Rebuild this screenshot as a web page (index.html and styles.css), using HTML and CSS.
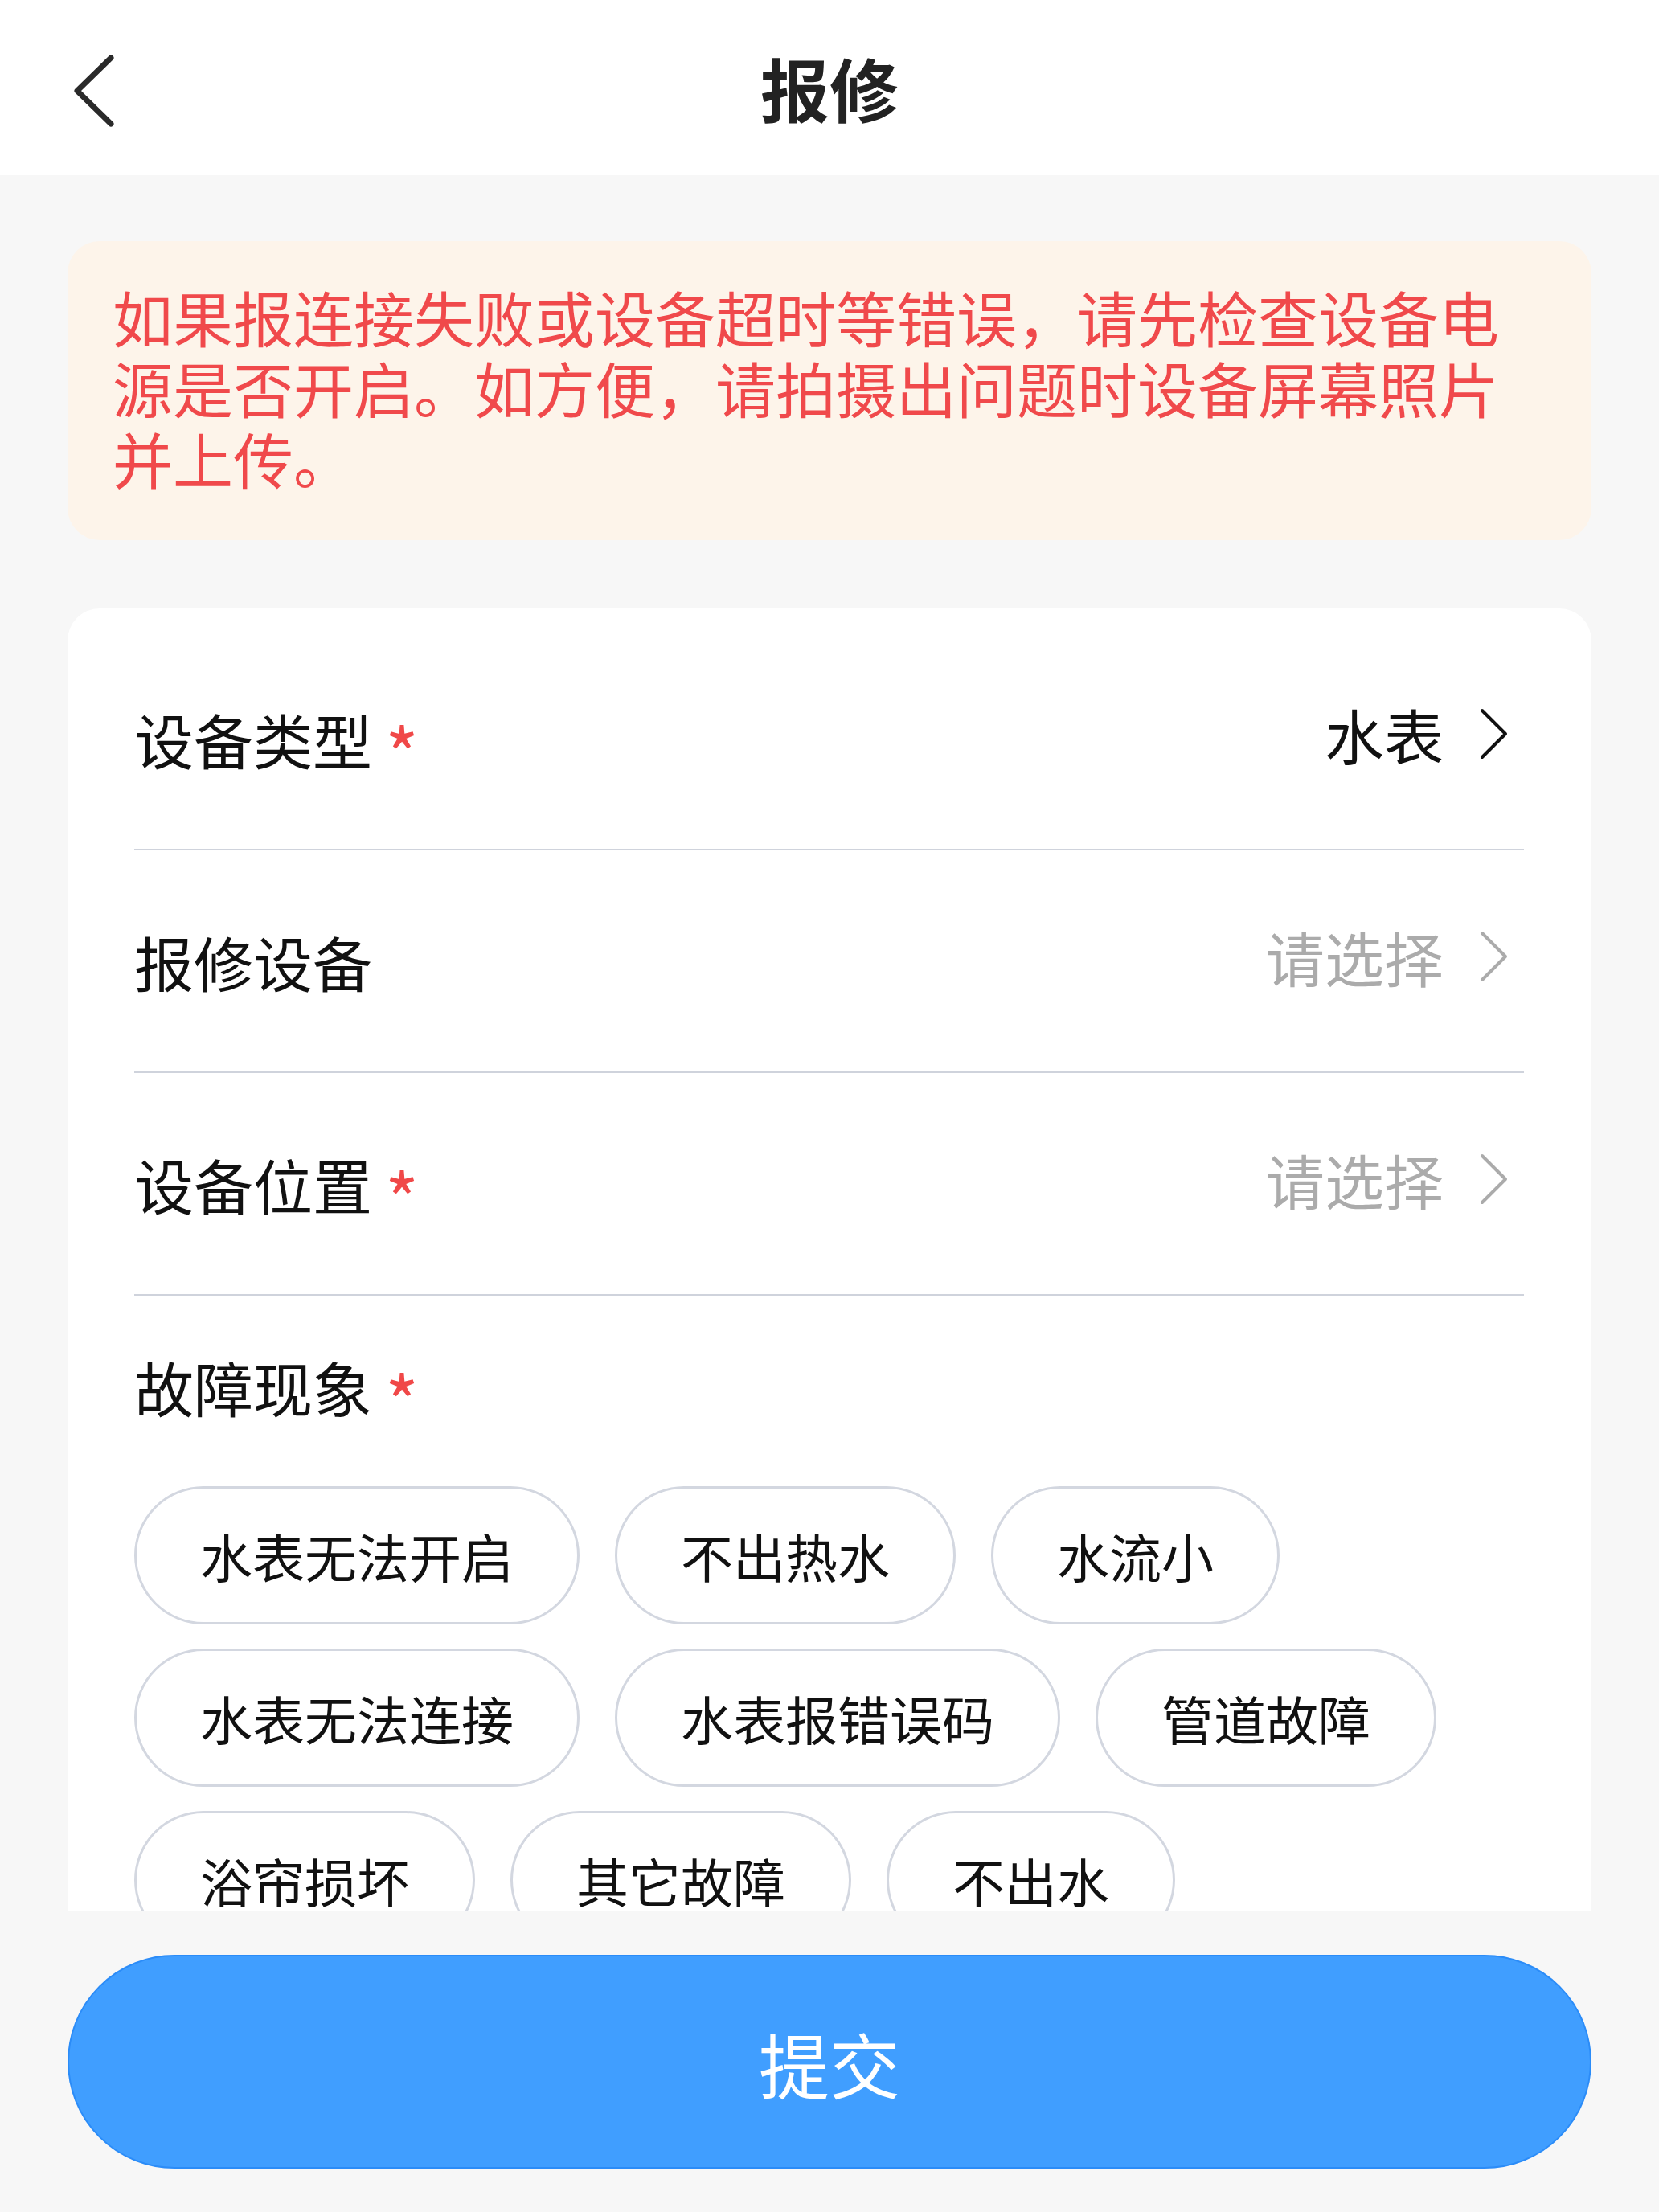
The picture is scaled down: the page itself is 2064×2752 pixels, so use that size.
FILE: index.html
```html
<!DOCTYPE html>
<html lang="zh-CN">

<head>
    <meta charset="UTF-8">
    <meta name="viewport" content="width=device-width, initial-scale=1.0">
    <title>报修</title>
    <link rel="stylesheet" href="styles.css">
</head>

<body>
    <header class="nav-bar">
        <a class="back-btn" href="#">
            <svg viewBox="0 0 60 100" width="60" height="100">
                <path d="M52 12 L10 53 L52 94" fill="none" stroke="#2a2a2a" stroke-width="7" stroke-linecap="round" stroke-linejoin="round" />
            </svg>
        </a>
        <h1 class="nav-title">报修</h1>
    </header>

    <main class="page-body">
        <div class="notice">
            如果报连接失败或设备超时等错误，请先检查设备电源是否开启。如方便，请拍摄出问题时设备屏幕照片并上传。
        </div>

        <div class="form-card">
            <div class="form-row">
                <span class="row-label">设备类型<i class="required">*</i></span>
                <span class="row-value">
                    水表
                    <svg class="arrow" viewBox="0 0 36 64" width="36" height="64">
                        <path d="M4 3 L33 32 L4 61" fill="none" stroke="#111" stroke-width="4" stroke-linecap="round" stroke-linejoin="round" />
                    </svg>
                </span>
            </div>
            <div class="form-row">
                <span class="row-label">报修设备</span>
                <span class="row-value placeholder">
                    请选择
                    <svg class="arrow" viewBox="0 0 36 64" width="36" height="64">
                        <path d="M4 3 L33 32 L4 61" fill="none" stroke="#ababab" stroke-width="4" stroke-linecap="round" stroke-linejoin="round" />
                    </svg>
                </span>
            </div>
            <div class="form-row">
                <span class="row-label">设备位置<i class="required">*</i></span>
                <span class="row-value placeholder">
                    请选择
                    <svg class="arrow" viewBox="0 0 36 64" width="36" height="64">
                        <path d="M4 3 L33 32 L4 61" fill="none" stroke="#ababab" stroke-width="4" stroke-linecap="round" stroke-linejoin="round" />
                    </svg>
                </span>
            </div>

            <!-- 故障现象 -->
            <div class="fault-block">
                <div class="row-label">故障现象<i class="required">*</i></div>
                <div class="tag-list">
                    <span class="tag">水表无法开启</span>
                    <span class="tag">不出热水</span>
                    <span class="tag">水流小</span>
                    <span class="tag">水表无法连接</span>
                    <span class="tag">水表报错误码</span>
                    <span class="tag">管道故障</span>
                    <span class="tag">浴帘损坏</span>
                    <span class="tag">其它故障</span>
                    <span class="tag">不出水</span>
                </div>
            </div>
        </div>
    </main>

    <footer class="footer">
        <button class="submit-btn" type="button">提交</button>
    </footer>
</body>

</html>
```

FILE: styles.css
```css
body {
    margin: 0;
    height: 100vh;
    display: flex;
    flex-direction: column;
    background: #f7f7f7;
    color: #111;
    font-family: "Noto Sans CJK SC", "Noto Sans", sans-serif;
    overflow: hidden;
}

.nav-bar {
    position: relative;
    height: 218px;
    flex-shrink: 0;
    background: #fff;
    display: flex;
    justify-content: center;
    align-items: center;
}

.back-btn {
    position: absolute;
    left: 86px;
    top: 60px;
    display: block;
    line-height: 0;
}

.nav-title {
    margin: 0;
    font-size: 86px;
    font-weight: 700;
    color: #222;
    line-height: 1;
}

.page-body {
    flex: 1;
    overflow: hidden;
    padding: 82px 84px 0;
}

.notice {
    background: #fdf4ea;
    border-radius: 40px;
    padding: 50px 56px 58px;
    color: #f0494b;
    font-size: 75px;
    line-height: 88px;
    margin-bottom: 85px;
}

.form-card {
    background: #fff;
    border-radius: 40px;
    padding: 24px 84px 80px 83px;
}

.form-row {
    height: 275px;
    display: flex;
    align-items: center;
    justify-content: space-between;
    border-bottom: 2px solid #cfd3dc;
}

.row-label {
    height: 89px;
    font-size: 74px;
    line-height: 89px;
    color: #111;
    display: flex;
    align-items: flex-start;
}

.required {
    font-style: normal;
    color: #f04848;
    font-size: 90px;
    line-height: 54px;
    height: 54px;
    margin-left: 16px;
    margin-top: 34px;
}

.row-value {
    display: flex;
    align-items: center;
    font-size: 74px;
    color: #111;
    padding-right: 20px;
    margin-bottom: 12px;
}

.row-value.placeholder {
    color: #ababab;
}

.arrow {
    margin-left: 44px;
}

.fault-block {
    padding-top: 68px;
}

.tag-list {
    display: flex;
    flex-wrap: wrap;
    gap: 30px 44px;
    margin-top: 80px;
}

.tag {
    height: 166px;
    line-height: 166px;
    padding: 0 79px;
    border: 3px solid #d3d7e0;
    border-radius: 86px;
    font-size: 65px;
    color: #111;
}

.footer {
    height: 374px;
    flex-shrink: 0;
    box-sizing: border-box;
    padding: 54px 84px;
}

.submit-btn {
    width: 100%;
    height: 266px;
    border: 2px solid #2b8cf8;
    border-radius: 133px;
    background: #409eff;
    color: #fff;
    font-family: inherit;
    font-size: 88px;
    cursor: pointer;
}
```
